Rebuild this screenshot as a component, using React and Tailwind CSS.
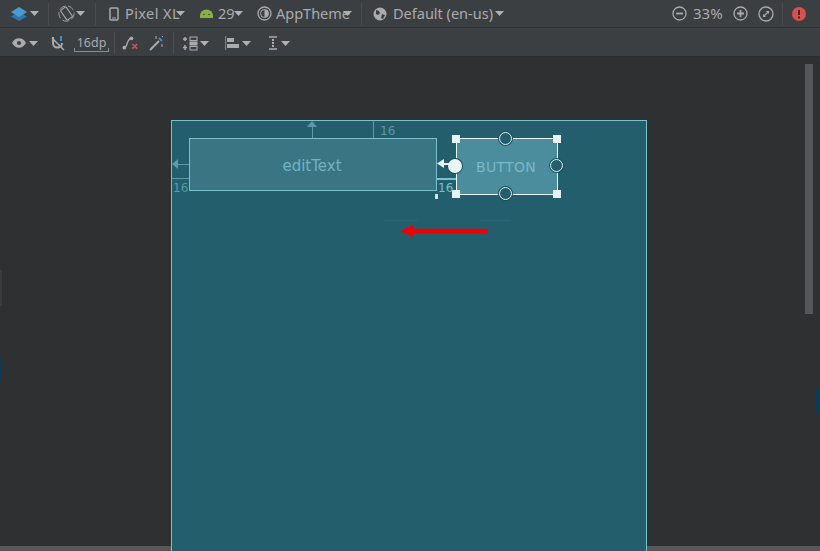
import React from "react";

const Caret = ({ x = 0, cls = "" }) => (
  <svg width="9" height="5" viewBox="0 0 9 5" className={"shrink-0 " + cls} style={x ? { marginLeft: x } : undefined}>
    <path d="M0 0h9L4.500 5z" fill="#afb1b3" />
  </svg>
);
const Sep = ({ cls = "" }) => <div className={"w-px h-[22px] bg-[#4b4d4f] shrink-0 " + cls} />;
const Handle = ({ cls }) => <div className={"absolute w-[8px] h-[8px] bg-[#e6f3f5] " + cls} />;
const Ring = ({ cls }) => (
  <div className={"absolute w-[13px] h-[13px] rounded-full border border-[#e4f1f3] bg-[#235e6c] shadow-[0_0_0_1px_#1d4f5b] " + cls} />
);

export default function App() {
  return (
    <div className="w-[820px] h-[551px] overflow-hidden flex flex-col bg-[#2e3031] text-[#a9abad] font-['Noto_Sans','Open_Sans',sans-serif]">
      {/* Top toolbar */}
      <div className="h-[28px] shrink-0 flex items-center bg-[#3c3f41] border-b border-[#2f3132] text-[14.5px] leading-none">
        <svg width="18" height="16" viewBox="0 0 18 16" className="ml-[10px] shrink-0">
          <path d="M9 6 17 10.500 9 15 1 10.500z" fill="#2f78ad" />
          <path d="M9 1 17 6 9 11 1 6z" fill="#4a9ad4" />
        </svg>
        <Caret x={2} />
        <Sep cls="ml-[9px]" />
        <svg width="17" height="17" viewBox="0 0 20 20" className="ml-[9px] shrink-0" fill="none" stroke="#a9abad">
          <circle cx="10" cy="10" r="9" strokeDasharray="8 3" />
          <rect x="6" y="3" width="8" height="14" rx="1" transform="rotate(-35 10 10)" strokeWidth="1.300" />
        </svg>
        <Caret x={1} />
        <Sep cls="ml-[10px]" />
        <svg width="10" height="14" viewBox="0 0 10 14" className="ml-[13px] shrink-0" fill="none">
          <rect x="1" y="1" width="8" height="12" rx="1" stroke="#a9abad" strokeWidth="1.500" />
          <path d="M3 11h4" stroke="#a9abad" />
        </svg>
        <span className="ml-[6px] w-[51px] whitespace-nowrap tracking-[0.4px]">Pixel XL</span>
        <Caret x={0} />
        <svg width="13" height="9" viewBox="0 0 13 9" className="ml-[15px] shrink-0">
          <path d="M0 9V6.500a6.500 6 0 0 1 13 0V9z" fill="#86b342" />
          <circle cx="4" cy="5.500" r="0.800" fill="#3c3f41" />
          <circle cx="9" cy="5.500" r="0.800" fill="#3c3f41" />
        </svg>
        <span className="ml-[5px] whitespace-nowrap w-[16px]">29</span>
        <Caret x={0} />
        <svg width="15" height="15" viewBox="0 0 15 15" className="ml-[14px] shrink-0" fill="none">
          <circle cx="7.500" cy="7.500" r="6.500" stroke="#a9abad" strokeWidth="1.300" />
          <path d="M7.500 3.500a4 4 0 0 1 0 8z" fill="#a9abad" />
          <circle cx="7.500" cy="7.500" r="4" stroke="#a9abad" />
        </svg>
        <span className="ml-[4px] whitespace-nowrap w-[70px]">AppTheme</span>
        <Caret x={-3} />
        <Sep cls="ml-[9px]" />
        <svg width="14" height="14" viewBox="0 0 14 14" className="ml-[11px] shrink-0">
          <circle cx="7" cy="7" r="6.500" fill="#a9abad" />
          <path d="M3 3l3 1 1 2-2 2-2-1zM9 7l3 1-2 4-2-1z" fill="#3c3f41" />
        </svg>
        <span className="ml-[6px] whitespace-nowrap w-[102px]">Default (en-us)</span>
        <Caret x={0} />
        <div className="flex-1" />
        <svg width="15" height="15" viewBox="0 0 15 15" fill="none" className="shrink-0" stroke="#a9abad" strokeWidth="1.300">
          <circle cx="7.500" cy="7.500" r="6.500" />
          <path d="M4 7.500h7" strokeWidth="1.800" />
        </svg>
        <span className="ml-[6px] w-[38px] whitespace-nowrap text-[15px]">33%</span>
        <svg width="15" height="15" viewBox="0 0 15 15" fill="none" className="ml-[2px] shrink-0" stroke="#a9abad" strokeWidth="1.300">
          <circle cx="7.500" cy="7.500" r="6.500" />
          <path d="M4 7.500h7M7.500 4v7" strokeWidth="1.800" />
        </svg>
        <svg width="16" height="16" viewBox="0 0 16 16" fill="none" className="ml-[10px] shrink-0" stroke="#a9abad" strokeWidth="1.300">
          <circle cx="8" cy="8" r="7" />
          <path d="M5 11V8l3 3zM11 5v3L8 5z" fill="#a9abad" stroke="none" />
          <path d="M5.500 10.500l5-5" />
        </svg>
        <Sep cls="ml-[8px]" />
        <svg width="14" height="14" viewBox="0 0 14 14" className="ml-[9px] mr-[14px] shrink-0">
          <circle cx="7" cy="7" r="7" fill="#d9504e" />
          <path d="M6 3h2v5H6zM6 9.500h2v2H6z" fill="#3c2a2a" />
        </svg>
      </div>

      {/* Second toolbar */}
      <div className="h-[29px] shrink-0 flex items-center pt-[2px] bg-[#3c3f41] border-b border-[#2b2d2e] text-[12px] leading-none">
        <svg width="14" height="10" viewBox="0 0 15 10" className="ml-[12px] shrink-0">
          <path d="M0 5c2-3.500 4.500-5 7.500-5S13 1.500 15 5c-2 3.500-4.500 5-7.500 5S2 8.500 0 5z" fill="#a9abad" />
          <circle cx="7.500" cy="5" r="2.200" fill="#3c3f41" />
        </svg>
        <Caret x={3} />
        <svg width="14" height="15" viewBox="0 0 14 15" className="ml-[13px] shrink-0" fill="none">
          <path d="M2 1v6a4.500 4.500 0 0 0 9 0" stroke="#a9abad" strokeWidth="2" />
          <path d="M10 0v5" stroke="#4a88c7" strokeWidth="2" />
          <path d="M1 2l12 12" stroke="#a9abad" strokeWidth="1.500" />
        </svg>
        <div className="relative ml-[9px] w-[35px] h-[18px] flex justify-center border-b border-[#8a8c8e] shrink-0">
          <div className="absolute left-0 bottom-0 w-px h-[3px] bg-[#8a8c8e]" />
          <div className="absolute right-0 bottom-0 w-px h-[3px] bg-[#8a8c8e]" />
          <span className="text-[12.5px] leading-[14px] pt-[2px] text-[#a9abad]">16dp</span>
        </div>
        <Sep cls="ml-[5px]" />
        <svg width="17" height="16" viewBox="0 0 18 16" className="ml-[7px] shrink-0" fill="none">
          <path d="M2 13c4 0 3-10 8-10" stroke="#a9abad" strokeWidth="1.500" />
          <circle cx="2.500" cy="13" r="2" fill="#a9abad" />
          <circle cx="10" cy="3" r="2" fill="#a9abad" />
          <path d="M11 9l5 5M16 9l-5 5" stroke="#c75450" strokeWidth="1.700" />
        </svg>
        <svg width="16" height="16" viewBox="0 0 16 16" className="ml-[10px] shrink-0" fill="none">
          <path d="M1 15l9-9" stroke="#a9abad" strokeWidth="2" />
          <path d="M10 3l3 3" stroke="#4a88c7" strokeWidth="2" />
          <path d="M7 1v3M13 9v3M13 1l1 1" stroke="#a9abad" />
        </svg>
        <Sep cls="ml-[8px]" />
        <svg width="16" height="15" viewBox="0 0 16 15" className="ml-[8px] shrink-0" fill="none" stroke="#a9abad">
          <path d="M3 1v4M1 3h4M3 9v5M1 11.500h4" strokeWidth="1.500" />
          <rect x="8" y="1" width="7" height="3.500" />
          <rect x="8" y="6" width="7" height="3" fill="#a9abad" />
          <rect x="8" y="10.500" width="7" height="3.500" />
        </svg>
        <Caret x={2} />
        <svg width="14" height="14" viewBox="0 0 14 14" className="ml-[16px] shrink-0">
          <path d="M0.500 0v14" stroke="#4a88c7" strokeWidth="1.300" />
          <rect x="2" y="2" width="7" height="4" fill="#a9abad" />
          <rect x="2" y="8" width="12" height="4" fill="#a9abad" />
        </svg>
        <Caret x={3} />
        <svg width="12" height="14" viewBox="0 0 12 14" className="ml-[16px] shrink-0" fill="none" stroke="#a9abad">
          <path d="M2 1h8M2 13h8" strokeWidth="1.500" />
          <path d="M6 3v8" strokeWidth="2" strokeDasharray="2 1" />
        </svg>
        <Caret x={2} />
      </div>

      {/* Canvas */}
      <div className="relative flex-1 min-h-0">
        {/* Device screen */}
        <div className="relative ml-[171px] mt-[63px] w-[476px] h-[440px] bg-[#235e6c] border border-[#7cc0cd] font-['DejaVu_Sans',sans-serif]">
          {/* editText */}
          <div className="absolute left-[17px] top-[17px] w-[248px] h-[53px] pt-[3px] pr-[2px] bg-[#3a7584] border border-[#7cc0cd] flex items-center justify-center text-[#72b3c2] text-[15px]">
            editText
          </div>
          {/* constraints editText */}
          <div className="absolute left-[140px] top-[4px] w-px h-[13px] bg-[#5d9aa7]" />
          <svg width="10" height="6" viewBox="0 0 10 6" className="absolute left-[135px] top-0">
            <path d="M5 0l5 6H0z" fill="#5d9aa7" />
          </svg>
          <div className="absolute left-[201px] top-0 w-px h-[17px] bg-[#5d9aa7]" />
          <span className="absolute left-[208px] top-[2px] text-[12px] leading-[16px] text-[#5a98a6]">16</span>
          <div className="absolute left-[4px] top-[43px] w-[13px] h-px bg-[#5d9aa7]" />
          <svg width="6" height="10" viewBox="0 0 6 10" className="absolute left-0 top-[38px]">
            <path d="M0 5l6-5v10z" fill="#5d9aa7" />
          </svg>
          <div className="absolute left-0 top-[57px] w-[17px] h-px bg-[#5d9aa7]" />
          <span className="absolute left-px top-[60px] text-[12px] leading-[14px] text-[#5a98a6]">16</span>

          {/* Button selection */}
          <div className="absolute left-[284px] top-[17px] w-[102px] h-[57px] pt-[2px] pr-[2px] bg-[#4b8d9d] border-[1.5px] border-[#eaf5f7] flex items-center justify-center text-[#7ab9c8] text-[14px] tracking-[0.3px]">
            BUTTON
          </div>
          <Handle cls="left-[280px] top-[14px]" />
          <Handle cls="left-[381px] top-[14px]" />
          <Handle cls="left-[280px] top-[69px]" />
          <Handle cls="left-[381px] top-[69px]" />
          <Ring cls="left-[327px] top-[11px]" />
          <Ring cls="left-[327px] top-[66px]" />
          <Ring cls="left-[378px] top-[38px]" />
          <div className="absolute left-[276px] top-[38px] w-[14px] h-[14px] rounded-full bg-[#e8f4f6] shadow-[0_0_0_1px_#1d4f5b]" />
          <div className="absolute left-[271px] top-[42px] w-[6px] h-[2px] bg-[#e8f4f6]" />
          <svg width="7" height="9" viewBox="0 0 7 9" className="absolute left-[265px] top-[38px]">
            <path d="M0 4.500l7-4.500v9z" fill="#e8f4f6" />
          </svg>
          <div className="absolute left-[264px] top-[57px] w-[20px] h-[2px] bg-[#7cc0cd]" />
          <span className="absolute left-[266px] top-[60px] text-[12px] leading-[14px] text-[#7cc0cd]">16</span>
          <div className="absolute left-[263px] top-[73px] w-[3px] h-[5px] bg-[#cfe4e8]" />

          {/* Faint ghost lines from the drag */}
          <div className="absolute left-[211px] top-[99px] w-[35px] h-px bg-[#2a6674]" />
          <div className="absolute left-[308px] top-[99px] w-[30px] h-px bg-[#2a6674]" />

          {/* Red annotation arrow */}
          <svg width="90" height="14" viewBox="0 0 90 14" className="absolute left-[227px] top-[103px]">
            <path d="M1 7 14 1v3.700h73a2.300 2.300 0 0 1 0 4.600H14V13z" fill="#f00000" />
          </svg>
        </div>

        {/* Scrollbar */}
        <div className="absolute right-[7px] top-[7px] w-[8px] h-[250px] bg-[#55585a]" />
        {/* Side markers */}
        <div className="absolute left-0 top-[213px] w-[2px] h-[36px] bg-[#393b3c]" />
        <div className="absolute left-0 top-[300px] w-[2px] h-[24px] bg-[#0d3a55]" />
        <div className="absolute right-0 top-[333px] w-[5px] h-[24px] bg-[#0d3a55]" />
      </div>

      {/* Bottom strip */}
      <div className="h-[5px] shrink-0 bg-[#555759]" />
    </div>
  );
}
